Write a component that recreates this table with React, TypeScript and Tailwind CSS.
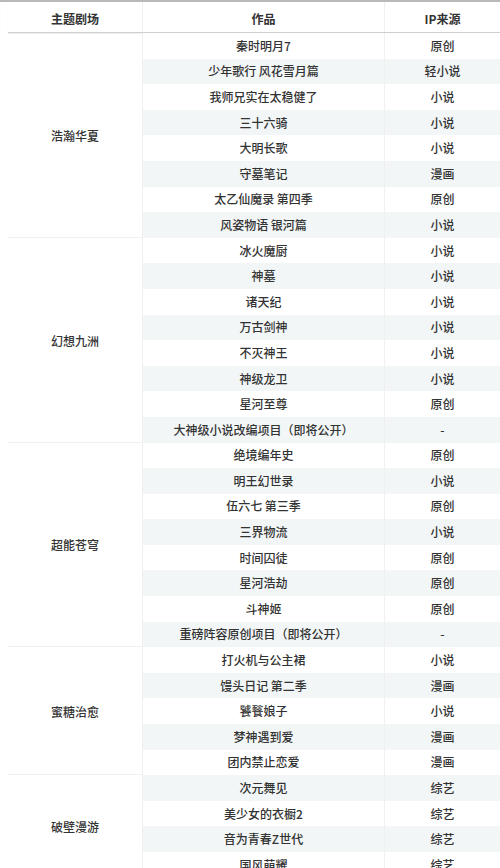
import React from "react";

type Group = { name: string; rows: [string, string][] };

const groups: Group[] = [
  {
    name: "浩瀚华夏",
    rows: [
      ["秦时明月7", "原创"],
      ["少年歌行 风花雪月篇", "轻小说"],
      ["我师兄实在太稳健了", "小说"],
      ["三十六骑", "小说"],
      ["大明长歌", "小说"],
      ["守墓笔记", "漫画"],
      ["太乙仙魔录 第四季", "原创"],
      ["风姿物语 银河篇", "小说"],
    ],
  },
  {
    name: "幻想九洲",
    rows: [
      ["冰火魔厨", "小说"],
      ["神墓", "小说"],
      ["诸天纪", "小说"],
      ["万古剑神", "小说"],
      ["不灭神王", "小说"],
      ["神级龙卫", "小说"],
      ["星河至尊", "原创"],
      ["大神级小说改编项目（即将公开）", "-"],
    ],
  },
  {
    name: "超能苍穹",
    rows: [
      ["绝境编年史", "原创"],
      ["明王幻世录", "小说"],
      ["伍六七 第三季", "原创"],
      ["三界物流", "小说"],
      ["时间囚徒", "原创"],
      ["星河浩劫", "原创"],
      ["斗神姬", "原创"],
      ["重磅阵容原创项目（即将公开）", "-"],
    ],
  },
  {
    name: "蜜糖治愈",
    rows: [
      ["打火机与公主裙", "小说"],
      ["馒头日记 第二季", "漫画"],
      ["饕餮娘子", "小说"],
      ["梦神遇到爱", "漫画"],
      ["团内禁止恋爱", "漫画"],
    ],
  },
  {
    name: "破壁漫游",
    rows: [
      ["次元舞见", "综艺"],
      ["美少女的衣橱2", "综艺"],
      ["音为青春Z世代", "综艺"],
      ["国风萌耀", "综艺"],
    ],
  },
];

export default function App() {
  let idx = 0;
  return (
    <div
      className="w-[500px] h-[868px] overflow-hidden bg-white border-t-2 border-[#b9b9b9] text-[12px] text-[#333] font-medium"
      style={{ fontFamily: '"Noto Sans CJK SC", "Noto Sans", sans-serif' }}
    >
      <div className="ml-2 flex h-[31px] border-b border-[#cfcfcf] shadow-[0_1px_1px_rgba(0,0,0,0.06)] font-bold">
        <div className="w-[135px] flex items-center justify-center pt-[4px] border-r border-[#f0f0f0]">主题剧场</div>
        <div className="w-[242px] flex items-center justify-center pt-[4px] border-r border-[#f0f0f0]">作品</div>
        <div className="flex-1 flex items-center justify-center pt-[4px]">IP来源</div>
      </div>
      {groups.map((g) => (
        <div key={g.name} className="flex">
          <div className="ml-2 w-[135px] border-b border-[#f0f1f1] border-r border-r-[#f0f0f0] flex items-center justify-center pt-[2px]">
            {g.name}
          </div>
          <div className="flex-1 flex flex-col">
            {g.rows.map(([work, ip]) => {
              const striped = idx % 2 === 1;
              idx++;
              return (
                <div
                  key={work}
                  className={
                    "flex h-[25.6px] items-center " + (striped ? "bg-[#f2f6f6]" : "bg-white")
                  }
                >
                  <div className="w-[242px] text-center border-r border-[#f0f0f0] h-full flex items-center justify-center">
                    {work}
                  </div>
                  <div className="flex-1 text-center">{ip}</div>
                </div>
              );
            })}
          </div>
        </div>
      ))}
    </div>
  );
}
